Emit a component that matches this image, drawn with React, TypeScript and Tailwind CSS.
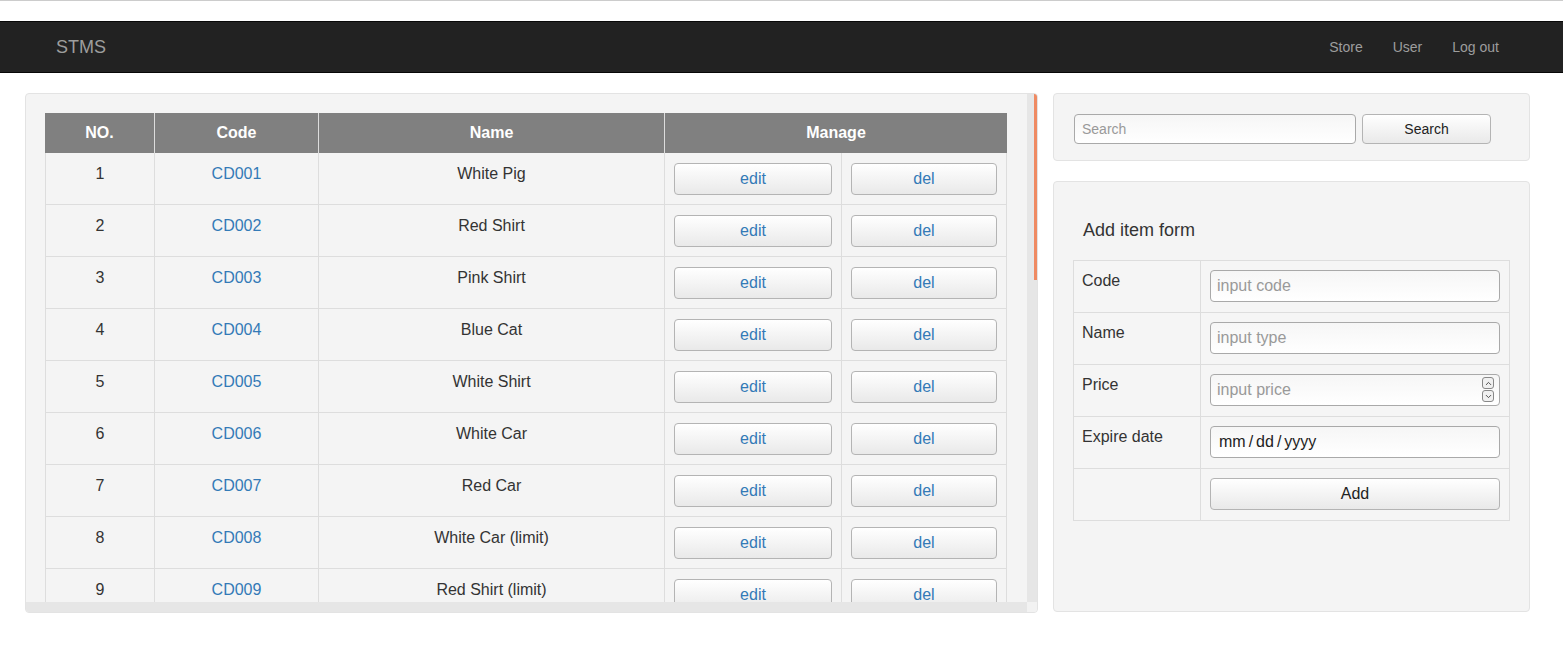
import { ChevronUp, ChevronDown } from "lucide-react"

const items = [
	{ no: 1, code: "CD001", name: "White Pig" },
	{ no: 2, code: "CD002", name: "Red Shirt" },
	{ no: 3, code: "CD003", name: "Pink Shirt" },
	{ no: 4, code: "CD004", name: "Blue Cat" },
	{ no: 5, code: "CD005", name: "White Shirt" },
	{ no: 6, code: "CD006", name: "White Car" },
	{ no: 7, code: "CD007", name: "Red Car" },
	{ no: 8, code: "CD008", name: "White Car (limit)" },
	{ no: 9, code: "CD009", name: "Red Shirt (limit)" },
]

const btn =
	"w-full h-[32px] rounded-[4px] border border-[#b4b4b4] bg-gradient-to-b from-[#ffffff] to-[#e9e9e9] text-[16px] leading-none"

const Navbar = () => (
	<div className="h-[52px] bg-[#222222] border-y border-[#080808] flex items-center justify-between pl-[56px] pr-[49px]">
		<span className="text-[18px] text-[#9d9d9d]">STMS</span>
		<div className="flex text-[14px] text-[#9d9d9d]">
			<span className="px-[15px]">Store</span>
			<span className="px-[15px]">User</span>
			<span className="px-[15px]">Log out</span>
		</div>
	</div>
)

const ItemRow = ({ no, code, name }: { no: number; code: string; name: string }) => (
	<div className="flex h-[52px] border-b border-[#dddddd] text-[16px] leading-[22px]">
		<div className="w-[109px] shrink-0 border-l border-[#dddddd] text-center pt-[10px] text-[#333333]">{no}</div>
		<div className="w-[164px] shrink-0 border-l border-[#dddddd] text-center pt-[10px] text-[#337ab7]">{code}</div>
		<div className="w-[346px] shrink-0 border-l border-[#dddddd] text-center pt-[10px] text-[#333333]">{name}</div>
		<div className="w-[177px] shrink-0 border-l border-[#dddddd] px-[9px] pt-[10px]">
			<button className={`${btn} text-[#337ab7]`}>edit</button>
		</div>
		<div className="w-[166px] shrink-0 border-x border-[#dddddd] px-[9px] pt-[10px]">
			<button className={`${btn} text-[#337ab7]`}>del</button>
		</div>
	</div>
)

const ItemsPanel = () => (
	<div className="w-[1013px] h-[520px] shrink-0 rounded-[4px] border border-[#e3e3e3] bg-[#f4f4f4] flex flex-col overflow-hidden">
		<div className="flex flex-1 min-h-0">
			<div className="flex-1 overflow-hidden pl-[19px] pt-[19px]">
				<div className="w-[962px]">
					<div className="flex h-[40px] bg-[#808080] text-white font-bold text-[16px] items-center text-center">
						<div className="w-[109px] h-full flex items-center justify-center">NO.</div>
						<div className="w-[164px] h-full flex items-center justify-center border-l border-[#dddddd]">Code</div>
						<div className="w-[346px] h-full flex items-center justify-center border-l border-[#dddddd]">Name</div>
						<div className="flex-1 h-full flex items-center justify-center border-l border-[#dddddd]">Manage</div>
					</div>
					{items.map((it) => (
						<ItemRow key={it.no} {...it} />
					))}
				</div>
			</div>
			{/* vertical scrollbar */}
			<div className="w-[10px] shrink-0 bg-[#e6e6e6] flex justify-end">
				<div className="w-[3px] h-[186px] bg-[#ef8a62]" />
			</div>
		</div>
		<div className="flex h-[10px] shrink-0">
			<div className="flex-1 bg-[#e6e6e6]" />
			<div className="w-[10px] bg-[#f2f2f2]" />
		</div>
	</div>
)

const SearchPanel = () => (
	<div className="h-[68px] rounded-[4px] border border-[#e3e3e3] bg-[#f4f4f4] flex items-start gap-[6px] pl-[20px] pt-[20px]">
		<input
			placeholder="Search"
			className="w-[282px] h-[30px] rounded-[4px] border border-[#a9a9a9] bg-gradient-to-b from-[#f6f6f6] to-[#ffffff] px-[7px] text-[14px] text-[#333] placeholder:text-[#999999] outline-none"
		/>
		<button className="w-[129px] h-[30px] rounded-[4px] border border-[#b4b4b4] bg-gradient-to-b from-[#ffffff] to-[#e9e9e9] text-[14px] text-[#222]">
			Search
		</button>
	</div>
)

const field =
	"w-full h-[32px] rounded-[4px] border border-[#a9a9a9] bg-gradient-to-b from-[#f6f6f6] to-[#ffffff] px-[6px] text-[16px] text-[#333] placeholder:text-[#999999] outline-none"

const FormRow = ({ label, children }: { label: string; children: React.ReactNode }) => (
	<div className="flex h-[52px] border-b border-[#dddddd] text-[16px] leading-[22px] text-[#333333]">
		<div className="w-[127px] shrink-0 border-r border-[#dddddd] pl-[8px] pt-[9px]">{label}</div>
		<div className="flex-1 px-[9px] pt-[9px]">{children}</div>
	</div>
)

const AddPanel = () => (
	<div className="h-[431px] rounded-[4px] border border-[#e3e3e3] bg-[#f4f4f4] px-[19px] pt-[36px]">
		<div className="text-[18px] leading-[24px] text-[#333333] pl-[10px] mb-[18px]">Add item form</div>
		<div className="border border-[#dddddd] border-b-0 bg-[#f5f5f5]">
			<FormRow label="Code">
				<input placeholder="input code" className={field} />
			</FormRow>
			<FormRow label="Name">
				<input placeholder="input type" className={field} />
			</FormRow>
			<FormRow label="Price">
				<div className="relative">
					<input placeholder="input price" className={field} />
					<div className="absolute right-[6px] top-[3px] flex flex-col gap-[1px]">
						<span className="w-[12px] h-[12px] rounded-[3px] border border-[#888] bg-[#f0f0f0] flex items-center justify-center">
							<ChevronUp className="w-[9px] h-[9px] text-[#444]" strokeWidth={2.5} />
						</span>
						<span className="w-[12px] h-[12px] rounded-[3px] border border-[#888] bg-[#f0f0f0] flex items-center justify-center">
							<ChevronDown className="w-[9px] h-[9px] text-[#444]" strokeWidth={2.5} />
						</span>
					</div>
				</div>
			</FormRow>
			<FormRow label="Expire date">
				<div className={`${field} flex items-center px-[8px] bg-white`}>
					<span className="text-[#222]">mm</span>
					<span className="px-[3px] text-[#222]">/</span>
					<span className="text-[#222]">dd</span>
					<span className="px-[3px] text-[#222]">/</span>
					<span className="text-[#222]">yyyy</span>
				</div>
			</FormRow>
			<FormRow label="">
				<button className={`${btn} text-[#222]`}>Add</button>
			</FormRow>
		</div>
	</div>
)

export default function App() {
	return (
		<div className="min-h-screen bg-white font-['Liberation_Sans',Arial,sans-serif]">
			<div className="h-px bg-[#cccccc]" />
			<div className="h-[20px]" />
			<Navbar />
			<div className="flex gap-[15px] pl-[25px] pt-[20px]">
				<ItemsPanel />
				<div className="w-[477px] shrink-0 flex flex-col gap-[20px]">
					<SearchPanel />
					<AddPanel />
				</div>
			</div>
		</div>
	)
}
